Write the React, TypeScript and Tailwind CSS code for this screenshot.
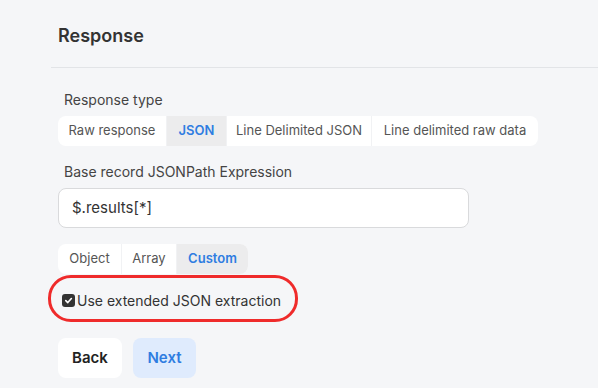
const font = { fontFamily: 'Inter, "Noto Sans", sans-serif' }

type Seg = { label: string; active?: boolean; w: string }

function Segmented({ items }: { items: Seg[] }) {
	return (
		<div className="flex h-[30px] w-fit rounded-lg bg-white overflow-hidden">
			{items.map((it, i) => (
				<div
					key={it.label}
					className={`flex items-center justify-center text-[13px] ${it.w} ${
						i > 0 ? 'border-l border-[#f1f2f4]' : ''
					} ${it.active ? 'bg-[#ececed] font-semibold text-[#2f7de1]' : 'text-[#555]'}`}
				>
					{it.label}
				</div>
			))}
		</div>
	)
}

export default function App() {
	return (
		<div className="h-[388px] w-[598px] overflow-hidden bg-[#f5f6f8] pl-[51px]" style={font}>
			<div className="pt-[22px] pl-[7px] pb-[17px] border-b border-[#e2e4e7]">
				<h2 className="text-[18px] leading-[28px] font-semibold text-[#333]">Response</h2>
			</div>

			<div className="pl-[7px] pt-[22px]">
				<div className="pl-[6px] text-[14px] leading-[20px] text-[#444]">Response type</div>
				<div className="mt-[6px]">
					<Segmented
						items={[
							{ label: 'Raw response', w: 'w-[108px]' },
							{ label: 'JSON', active: true, w: 'w-[60px]' },
							{ label: 'Line Delimited JSON', w: 'w-[145px]' },
							{ label: 'Line delimited raw data', w: 'w-[167px]' },
						]}
					/>
				</div>

				<div className="mt-[16px] pl-[6px] text-[14px] leading-[20px] text-[#444]">
					Base record JSONPath Expression
				</div>
				<div className="mt-[6px] flex h-[40px] w-[411px] items-center rounded-lg border border-[#d9dadc] bg-white pl-[13px] text-[15px] text-[#333]">
					$.results[*]
				</div>

				<div className="mt-[16px]">
					<Segmented
						items={[
							{ label: 'Object', w: 'w-[63px]' },
							{ label: 'Array', w: 'w-[55px]' },
							{ label: 'Custom', active: true, w: 'w-[72px]' },
						]}
					/>
				</div>

				<div className="relative mt-[16px] flex h-[20px] items-center pl-[4px]">
					<div className="flex h-[13px] w-[13px] items-center justify-center rounded-[3px] bg-[#333]">
						<svg width="9" height="9" viewBox="0 0 10 10" fill="none">
							<path d="M2 5.2 L4.2 7.3 L8.2 2.8" stroke="white" strokeWidth="1.8" strokeLinecap="round" strokeLinejoin="round" />
						</svg>
					</div>
					<span className="ml-[2px] text-[14px] text-[#333]">Use extended JSON extraction</span>
					<div className="pointer-events-none absolute left-[-10px] top-[-15px] h-[47px] w-[250px] rounded-[23px] border-[3px] border-[#ef2b2b]" />
				</div>

				<div className="mt-[28px] flex gap-[11px]">
					<button className="h-[40px] w-[64px] rounded-lg bg-white text-[15px] font-semibold text-[#222]">Back</button>
					<button className="h-[40px] w-[63px] rounded-lg bg-[#dfebfd] text-[15px] font-semibold text-[#2f7de1]">Next</button>
				</div>
			</div>
		</div>
	)
}
